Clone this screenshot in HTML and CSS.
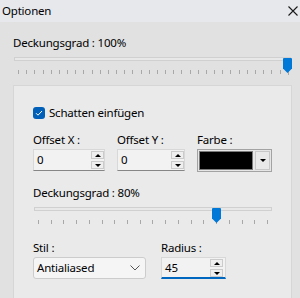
FILE: index.html
```html
<!DOCTYPE html>
<html>
  <head>
    <title>Optionen</title>
    <link rel="stylesheet" href="styles.css">
  </head>
  <body>
    <div class="titlebar">
      <span>Optionen</span>
      <svg class="close" width="10" height="10" viewBox="0 0 10 10">
        <path d="M0.5 0.5 L9.5 9.5 M9.5 0.5 L0.5 9.5" stroke="#1a1a1a" stroke-width="1.1" fill="none"/>
      </svg>
    </div>

    <div class="content">
      <div class="label">Deckungsgrad : 100%</div>
      <div class="slider">
        <div class="track"></div>
        <svg class="thumb thumb-top" width="9" height="15" viewBox="0 0 9 15">
          <path d="M1 0 H8 Q9 0 9 1 V10.5 L4.5 15 L0 10.5 V1 Q0 0 1 0 Z" fill="#0078d7"/>
        </svg>
        <div class="ticks">
          <span></span><span></span><span></span><span></span><span></span><span></span><span></span><span></span><span></span><span></span>
          <span></span><span></span><span></span><span></span><span></span><span></span><span></span><span></span><span></span><span></span>
          <span></span><span></span><span></span><span></span><span></span><span></span><span></span><span></span><span></span><span></span>
          <span></span><span></span><span></span><span class="end"></span>
        </div>
      </div>

      <div class="group">
        <div class="check-row">
          <span class="checkbox">
            <svg width="12" height="12" viewBox="0 0 12 12">
              <path d="M3 6.2 L5 8.2 L9 4" stroke="#fff" stroke-width="1" fill="none"/>
            </svg>
          </span>
          <span>Schatten einfügen</span>
        </div>

        <div class="fields">
          <div class="field">
            <div class="label small">Offset X :</div>
            <div class="spin">
              <span>0</span>
              <div class="spin-btns"><span class="btn up"></span><span class="btn down"></span></div>
            </div>
          </div>
          <div class="field">
            <div class="label small">Offset Y :</div>
            <div class="spin">
              <span>0</span>
              <div class="spin-btns"><span class="btn up"></span><span class="btn down"></span></div>
            </div>
          </div>
          <div class="field">
            <div class="label small">Farbe :</div>
            <div class="color">
              <span class="swatch"></span>
              <span class="drop"><span class="btn-arrow"></span></span>
            </div>
          </div>
        </div>

        <div class="label gap-label">Deckungsgrad : 80%</div>
        <div class="slider inner">
          <div class="track"></div>
          <svg class="thumb thumb-mid" width="9" height="15" viewBox="0 0 9 15">
            <path d="M1 0 H8 Q9 0 9 1 V10.5 L4.5 15 L0 10.5 V1 Q0 0 1 0 Z" fill="#0078d7"/>
          </svg>
          <div class="ticks">
            <span></span><span></span><span></span><span></span><span></span><span></span><span></span><span></span><span></span><span></span>
            <span></span><span></span><span></span><span></span><span></span><span></span><span></span><span></span><span></span>
          </div>
        </div>

        <div class="fields2">
          <div class="field">
            <div class="label small">Stil :</div>
            <div class="combo">
              <span>Antialiased</span>
              <svg width="10" height="6" viewBox="0 0 10 6">
                <path d="M0.5 0.5 L5 5 L9.5 0.5" stroke="#555" stroke-width="1" fill="none"/>
              </svg>
            </div>
          </div>
          <div class="field">
            <div class="label small">Radius :</div>
            <div class="spin focus">
              <span>45</span>
              <div class="spin-btns"><span class="btn up"></span><span class="btn down"></span></div>
            </div>
          </div>
        </div>
      </div>
    </div>
  </body>
</html>
```

FILE: styles.css
```css
body {
  margin: 0;
  background-color: #e1e1e1;
  font-family: "Noto Sans", "DejaVu Sans", sans-serif;
  font-size: 11.5px;
  letter-spacing: -0.2px;
  line-height: 16px;
  color: #000;
  overflow: hidden;
}

.titlebar {
  height: 22px;
  background-color: #e7e8ec;
  display: flex;
  align-items: center;
  justify-content: space-between;
  padding: 0 2px 0 2px;
}

.content {
  padding: 13px 8px 0 13px;
}

.label {
  height: 16px;
  white-space: nowrap;
}

.small {
  margin-bottom: 1px;
}

/* sliders */
.slider {
  position: relative;
  margin-top: 4px;
}
.slider.inner {
  margin-top: 1px;
}
.track {
  margin: 6px 1px 0 1px;
  height: 2px;
  border: 1px solid #d0d0d0;
  background-color: #e8e8e8;
}
.slider.inner .track {
  margin: 6px 0 0 1px;
}
.ticks {
  display: flex;
  justify-content: space-between;
  align-items: flex-start;
  height: 5px;
  margin-top: 9px;
  padding: 0 3px 0 5px;
}
.slider.inner .ticks {
  padding: 0 4px 0 5px;
}
.ticks span {
  width: 1px;
  height: 4px;
  background-color: #a8a8a8;
}
.ticks span.end {
  height: 5px;
}
.thumb {
  position: absolute;
  top: 1px;
}
.thumb-top {
  right: 0;
}
.thumb-mid {
  left: 179px;
}

/* group box */
.group {
  margin-top: 10px;
  background-color: #eaeaea;
  border: 1px solid #d6d6d6;
  padding: 19px 19px 40px 19px;
}

.check-row {
  display: flex;
  align-items: center;
  gap: 4px;
}
.checkbox {
  width: 12px;
  height: 12px;
  border-radius: 3px;
  background-color: #005fb8;
  display: flex;
}

.fields {
  display: grid;
  grid-template-columns: 72px 68px 75px;
  column-gap: 12px;
  margin-top: 11px;
}
.fields2 {
  display: grid;
  grid-template-columns: 113px 65px;
  column-gap: 15px;
  margin-top: 15px;
}
.gap-label {
  margin-top: 13px;
}

.spin {
  position: relative;
  height: 22px;
  box-sizing: border-box;
  border: 1px solid #d8d8d8;
  border-bottom-color: #868686;
  background-color: #f2f2f2;
  padding-left: 3px;
  display: flex;
  align-items: center;
}
.spin.focus {
  border-bottom: 2px solid #0067c0;
}
.spin-btns {
  position: absolute;
  right: 0;
  top: 1px;
  display: flex;
  flex-direction: column;
  gap: 2px;
}
.spin.focus .spin-btns {
  right: 2px;
}
.btn {
  width: 13px;
  height: 8px;
  box-sizing: border-box;
  border: 1px solid #cbcbcb;
  background-color: #efefef;
  display: flex;
  align-items: center;
  justify-content: center;
}
.btn.up::before {
  content: "";
  border-left: 3px solid transparent;
  border-right: 3px solid transparent;
  border-bottom: 3px solid #000;
}
.btn.down::before {
  content: "";
  border-left: 3px solid transparent;
  border-right: 3px solid transparent;
  border-top: 3px solid #000;
}

.color {
  height: 23px;
  box-sizing: border-box;
  border: 1px solid #a3a3a3;
  padding: 1px;
  display: flex;
  gap: 2px;
  background-color: #e6e6e6;
}
.swatch {
  flex: 1;
  background-color: #000;
  border: 1px solid #7a7a7a;
}
.drop {
  width: 15px;
  box-sizing: border-box;
  border: 1px solid #c8c8c8;
  background-color: #e9e9e9;
  display: flex;
  align-items: center;
  justify-content: center;
}
.btn-arrow {
  border-left: 3px solid transparent;
  border-right: 3px solid transparent;
  border-top: 3px solid #000;
}

.combo {
  height: 22px;
  box-sizing: border-box;
  border: 1px solid #cccccc;
  border-radius: 3px;
  background-color: #f5f5f5;
  padding: 0 5px 0 3px;
  display: flex;
  align-items: center;
  justify-content: space-between;
}
```
